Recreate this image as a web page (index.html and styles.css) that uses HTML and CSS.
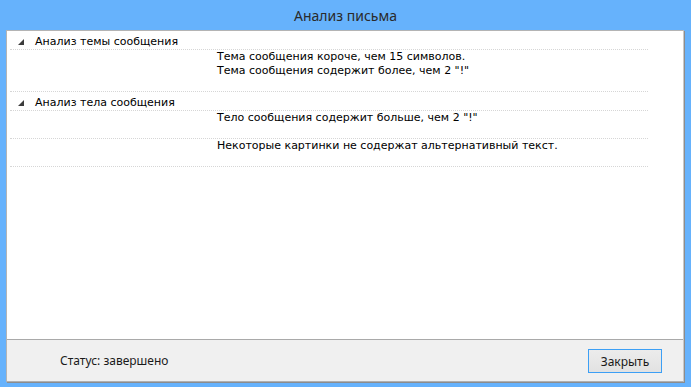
FILE: index.html
```html
<!DOCTYPE html>
<html lang="ru">
<head>
<meta charset="utf-8">
<title>Анализ письма</title>
<link rel="stylesheet" href="styles.css">
</head>
<body>
<div class="window">
  <div class="titlebar">Анализ письма</div>
  <div class="panel">
    <div class="tree">
      <div class="row header">
        <svg class="glyph" width="6" height="6" viewBox="0 0 6 6"><polygon points="6,0 6,6 0,6" fill="#3c3c3c"/></svg>
        <span class="htext">Анализ темы сообщения</span>
      </div>
      <div class="row child">
        <div class="ctext">Тема сообщения короче, чем 15 символов.<br>Тема сообщения содержит более, чем 2 "!"</div>
      </div>
      <div class="row header">
        <svg class="glyph" width="6" height="6" viewBox="0 0 6 6"><polygon points="6,0 6,6 0,6" fill="#3c3c3c"/></svg>
        <span class="htext">Анализ тела сообщения</span>
      </div>
      <div class="row child">
        <div class="ctext">Тело сообщения содержит больше, чем 2 "!"</div>
      </div>
      <div class="row child">
        <div class="ctext">Некоторые картинки не содержат альтернативный текст.</div>
      </div>
    </div>
    <div class="footer">
      <span class="status">Статус: завершено</span>
      <button class="btn" type="button">Закрыть</button>
    </div>
  </div>
</div>
</body>
</html>
```
FILE: styles.css
```css
html, body {
  margin: 0;
  padding: 0;
}
body {
  background: #66b2fc;
  width: 691px;
  height: 387px;
  overflow: hidden;
}
.window {
  display: flex;
  flex-direction: column;
  height: 387px;
}
.titlebar {
  height: 30px;
  display: flex;
  align-items: center;
  justify-content: center;
  font-family: "Noto Sans", "Open Sans", sans-serif;
  font-size: 14px;
  color: #2a2a2a;
  padding-top: 1px;
  box-sizing: border-box;
}
.panel {
  margin: 0 7px 5px 6px;
  flex: 1;
  display: flex;
  flex-direction: column;
  border: 1px solid #b4b4b4;
  border-right: 1px solid #c8c8c8;
  border-bottom: 1px solid #b0b0b0;
  box-shadow: 1px 1px 0 #8c8c8c;
  background: #fff;
}
.tree {
  flex: 1;
  background: #fff;
  padding-left: 3px;
  font-family: "DejaVu Sans", sans-serif;
  font-size: 11px;
  color: #000;
}
.row {
  width: 638px;
  border-bottom: 1px dotted #d6d6d6;
  box-sizing: border-box;
}
.header {
  height: 19px;
  display: flex;
  align-items: flex-start;
  padding-top: 4px;
  line-height: 14px;
}
.glyph {
  margin: 4px 0 0 8px;
  flex: none;
}
.htext {
  margin-left: 11px;
}
.child {
  padding: 0 0 13px 207px;
  line-height: 14px;
}
.footer {
  height: 41px;
  background: #f0f0f0;
  border-top: 1px solid #a9a9a9;
  display: flex;
  align-items: center;
  justify-content: space-between;
  padding: 0 21px 0 53px;
  font-family: "Noto Sans", "Open Sans", sans-serif;
  font-size: 12px;
  color: #1a1a1a;
}
.btn {
  width: 74px;
  height: 24px;
  border: 1px solid #3c9ff5;
  background: linear-gradient(#ececec, #e2e2e2);
  font-family: "Noto Sans", "Open Sans", sans-serif;
  font-size: 12px;
  color: #1a1a1a;
  padding: 0;
  margin-top: 1px;
}
```
